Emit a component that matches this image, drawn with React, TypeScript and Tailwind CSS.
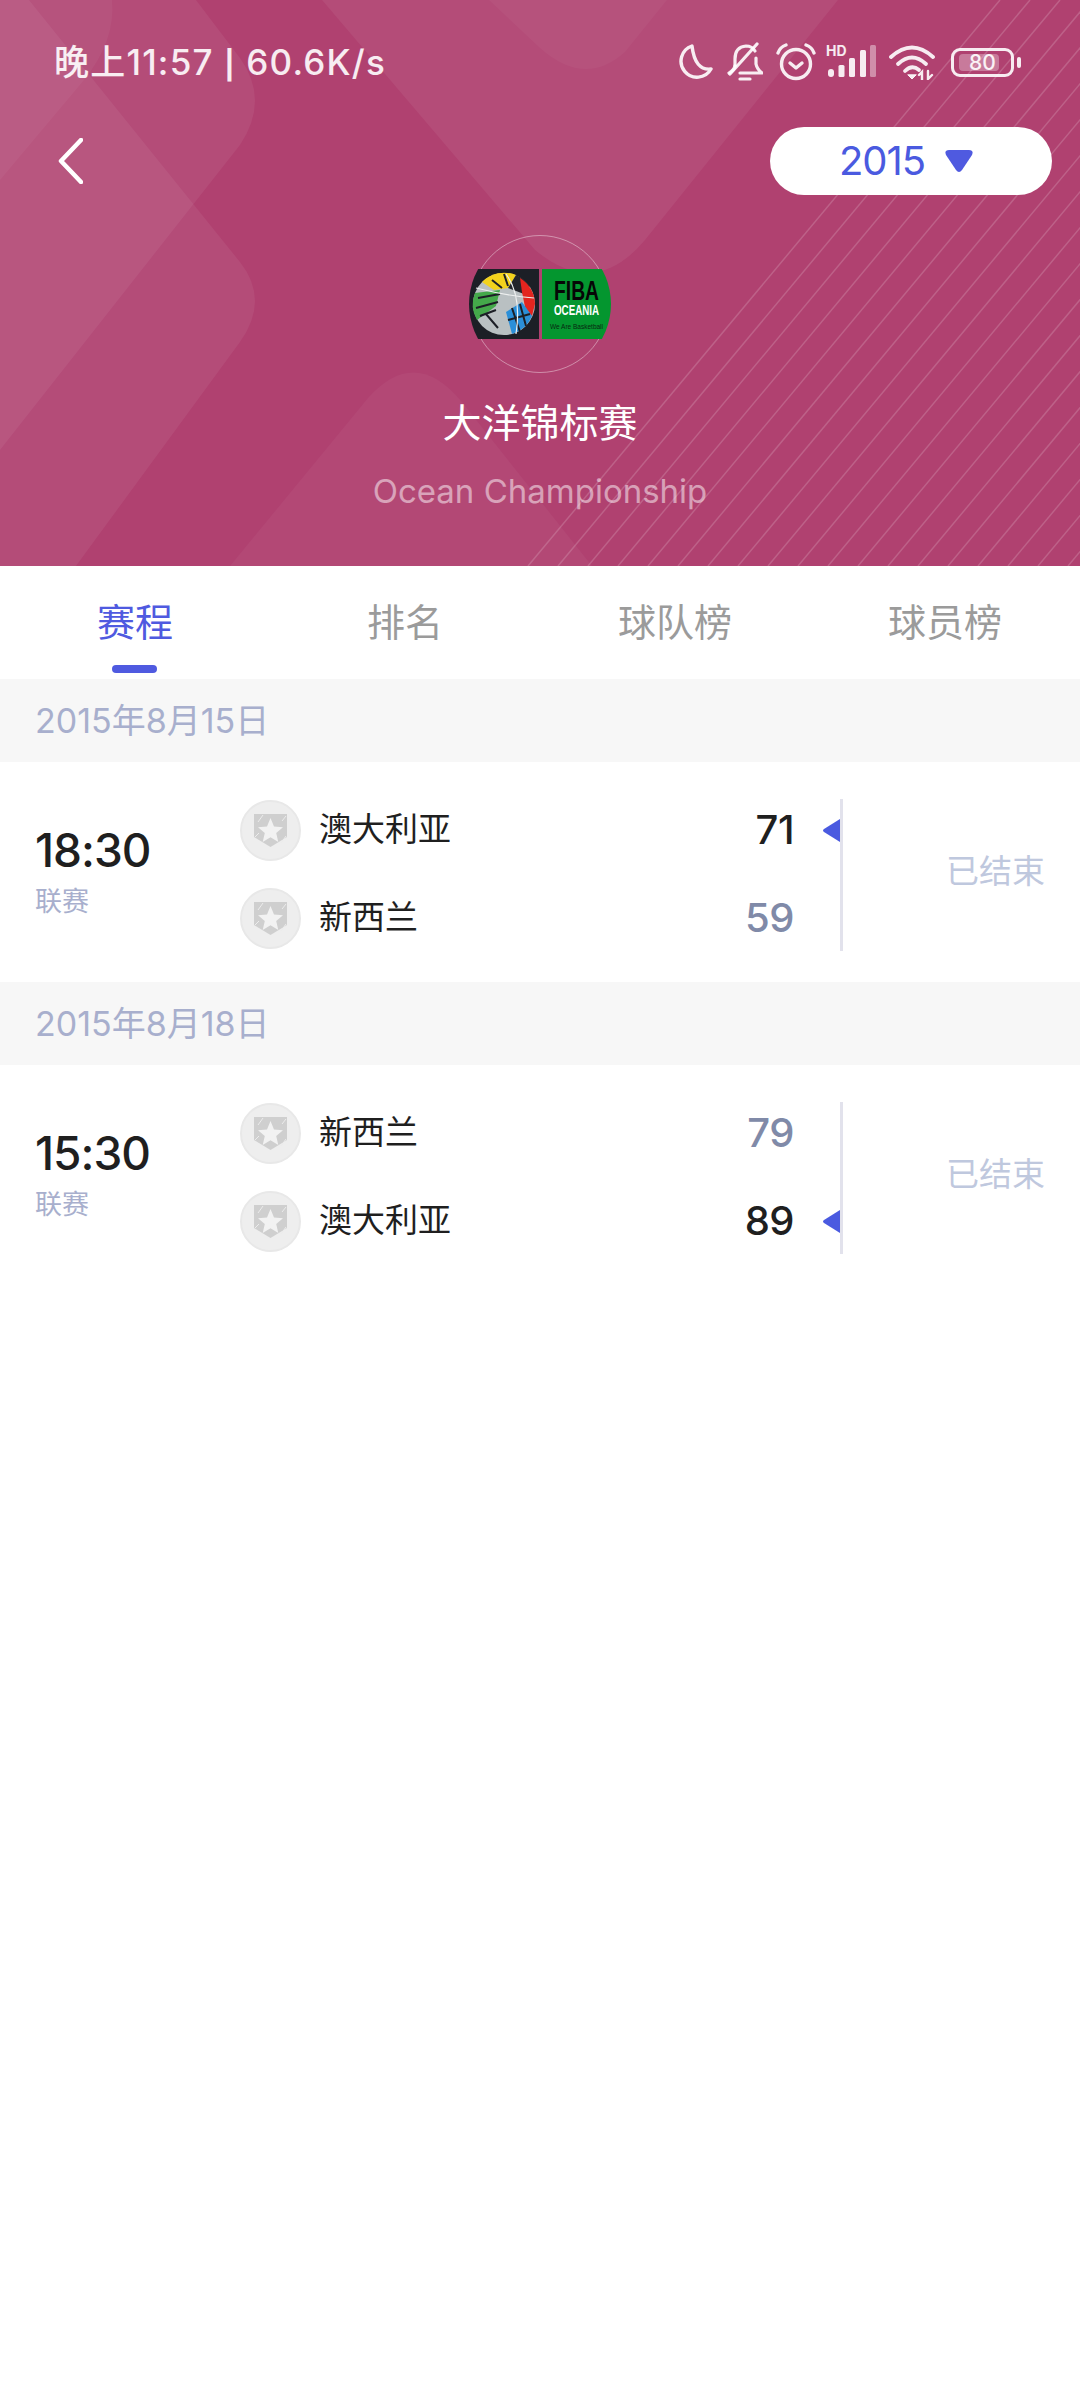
const fontStack = "font-['Inter','Noto_Sans_CJK_SC',sans-serif]";

const matches = [
  {
    date: "2015年8月15日",
    time: "18:30",
    teams: [
      { name: "澳大利亚", score: "71", won: true },
      { name: "新西兰", score: "59", won: false },
    ],
  },
  {
    date: "2015年8月18日",
    time: "15:30",
    teams: [
      { name: "新西兰", score: "79", won: false },
      { name: "澳大利亚", score: "89", won: true },
    ],
  },
];

const tabs = [
  { label: "赛程", active: true },
  { label: "排名", active: false },
  { label: "球队榜", active: false },
  { label: "球员榜", active: false },
];

const stripes = Array.from({ length: 19 }, (_, i) => 1000 + i * 30);

const HeaderBg = () => (
  <svg className="absolute inset-0" width="1080" height="566" viewBox="0 0 1080 566">
    <path d="M196 0 L240 58 Q270 100 240 145 L0 450 L0 0 Z" fill="#fff" fillOpacity="0.06" />
    <path d="M29 0 L240 262 Q270 300 240 342 L76 566 L0 566 L0 0 Z" fill="#fff" fillOpacity="0.06" />
    <path d="M112 0 Q116 40 84 80 L0 180 L0 0 Z" fill="#fff" fillOpacity="0.04" />
    <path d="M322 0 L535 250 Q595 300 645 240 L838 0 Z" fill="#fff" fillOpacity="0.06" />
    <path d="M489 0 L540 48 Q585 88 625 52 L667 0 Z" fill="#fff" fillOpacity="0.035" />
    <path d="M230 566 L368 398 Q415 345 462 402 L592 566 Z" fill="#fff" fillOpacity="0.04" />
    {stripes.map((x) => (
      <line key={x} x1={x} y1="0" x2={x - 472} y2="566" stroke="#fff" strokeOpacity="0.17" strokeWidth="1.5" />
    ))}
  </svg>
);

const StatusIcons = () => (
  <div className="flex items-center text-white/90">
    <svg className="w-[36px] h-[38px]" viewBox="0 0 36 38" fill="none" stroke="currentColor" strokeWidth="3.4" strokeLinejoin="round">
      <path d="M14 3 A16 16 0 1 0 33 26 Q17 28 14 3 Z" />
    </svg>
    <svg className="w-[36px] h-[40px] ml-[13px]" viewBox="0 0 36 40" fill="none" stroke="currentColor" strokeWidth="3.2" strokeLinecap="round" strokeLinejoin="round">
      <path d="M8 24 V17 Q8 5 19 4 Q25 4 28 9" />
      <path d="M29 16 V22 Q30 27 35 31 H13" />
      <path d="M8 24 Q7 28 2 31" />
      <path d="M3 32 L30 2" />
      <path d="M13 37 H23" />
    </svg>
    <svg className="w-[40px] h-[38px] ml-[13px]" viewBox="0 0 40 38" fill="none" stroke="currentColor" strokeWidth="3.4" strokeLinecap="round" strokeLinejoin="round">
      <circle cx="20" cy="21" r="14.5" />
      <path d="M14 20 L20 25 L26 20" />
      <path d="M2 10 Q4 4 10 2" />
      <path d="M38 10 Q36 4 30 2" />
    </svg>
    <svg className="w-[50px] h-[34px] ml-[10px] overflow-visible" viewBox="0 0 50 34">
      <text x="0" y="11" fontSize="14" fontWeight="700" fill="currentColor" fontFamily="Inter, sans-serif">HD</text>
      <rect x="2" y="24" width="6" height="8" rx="3" fill="currentColor" />
      <rect x="12.500" y="20" width="6" height="12" rx="1.500" fill="currentColor" />
      <rect x="23" y="13" width="6" height="19" rx="1.500" fill="currentColor" />
      <rect x="34" y="5" width="6" height="27" rx="1.500" fill="currentColor" />
      <rect x="44" y="0" width="6" height="32" rx="1.500" fill="currentColor" fillOpacity="0.45" />
    </svg>
    <svg className="w-[47px] h-[36px] ml-[13px]" viewBox="0 0 47 36" fill="none" stroke="currentColor" strokeWidth="3.8" strokeLinecap="round">
      <path d="M2 13 Q23 -6 44 13" />
      <path d="M9 20 Q23 7 37 20" />
      <path d="M16 27 Q23 20 30 26" />
      <path d="M19 31 L23 35 L27 31 Z" fill="currentColor" strokeWidth="1" />
      <path d="M33 36 V28 L30 31 M39 27 V35 L43 31" strokeWidth="2.400" />
    </svg>
    <div className="flex items-center ml-[15px]">
      <div className="relative w-[63px] h-[29px] border-[3px] border-white/90 rounded-[9px] overflow-hidden">
        <div className="absolute left-[5px] top-[3px] bottom-[3px] w-[40px] rounded-[4px] bg-white/30" />
        <span className="absolute inset-0 flex items-center justify-center text-[21px] leading-none font-medium">80</span>
      </div>
      <div className="w-[4px] h-[11px] ml-[3px] rounded-[2px] bg-white/90" />
    </div>
  </div>
);

const FibaLogo = () => (
  <svg className="w-[136px] h-[136px] overflow-visible" viewBox="0 0 136 136">
    <defs>
      <clipPath id="logo-clip">
        <circle cx="68" cy="68" r="71" />
      </clipPath>
    </defs>
    <g clipPath="url(#logo-clip)">
      <rect x="-3" y="33" width="70" height="70" fill="#1c1f26" />
      <rect x="70" y="33" width="70" height="70" fill="#04962f" />
      <circle cx="32" cy="68" r="31" fill="#b9c0c2" />
      <path d="M3 57 A31 31 0 0 0 5 84 L24 70 L28 54 Z" fill="#44a94a" />
      <path d="M10 46 A31 31 0 0 1 44 39 L36 52 L22 54 Z" fill="#f2d21c" />
      <path d="M44 39 L36 52 L52 58 L58 50 A31 31 0 0 0 44 39 Z" fill="#22252a" />
      <path d="M48 42 A31 31 0 0 1 63 68 L60 80 L54 76 L50 56 Z" fill="#e3251f" />
      <path d="M34 76 L50 66 L60 80 A31 31 0 0 1 40 98 Z" fill="#2b8fd8" />
      <path d="M6 62 L28 58 M4 72 L26 66 M8 80 L24 74 M40 72 L48 96 M48 68 L54 90 M36 84 L58 78 M14 78 L26 92 M20 44 L30 52 M32 38 L36 50" stroke="#1c1f26" strokeWidth="2" fill="none" />
      <path d="M34 38 Q50 60 44 98 M4 52 Q36 60 62 62" stroke="#eef0f0" strokeWidth="1.200" fill="none" />
      <text x="104.500" y="64" textAnchor="middle" fontSize="27" fontWeight="700" fill="#060606" fontFamily="'Liberation Sans', sans-serif" textLength="45" lengthAdjust="spacingAndGlyphs">FIBA</text>
      <text x="104.500" y="79" textAnchor="middle" fontSize="15" fontWeight="700" fill="#fff" fontFamily="'Liberation Sans', sans-serif" textLength="45" lengthAdjust="spacingAndGlyphs">OCEANIA</text>
      <text x="104.500" y="93" textAnchor="middle" fontSize="8" fill="#08260f" fontFamily="'Liberation Sans', sans-serif" textLength="53" lengthAdjust="spacingAndGlyphs">We Are Basketball</text>
    </g>
  </svg>
);

const TeamBadge = () => (
  <div className="w-[61px] h-[61px] shrink-0 rounded-full bg-[#eeeeee] border-2 border-[#e8e8e8] flex items-center justify-center">
    <svg className="w-[35px] h-[35px]" viewBox="0 0 35 35">
      <path d="M1 1 H34 V24 L17.500 34 L1 24 Z" fill="#cfcfcf" />
      <path d="M17.500 5 L21 13.400 L30 14.200 L23.200 20 L25.300 29 L17.500 24.300 L9.700 29 L11.800 20 L5 14.200 L14 13.400 Z" fill="#f2f2f2" />
      <path d="M5 9 L10 2 M29 8 L33 3 M28 30 L33 23 M2 24 L6 20" stroke="#ececec" strokeWidth="1" />
    </svg>
  </div>
);

const App = () => {
  return (
    <div className={`min-h-[2400px] w-[1080px] bg-white ${fontStack}`}>
      <header className="relative h-[566px] overflow-hidden bg-[#b04170]">
        <HeaderBg />
        <div className="relative pt-[41px]">
          <div className="flex items-center justify-between h-[42px] pl-[54px] pr-[59px]">
            <span className="text-[35px] leading-none font-medium tracking-[1.2px] text-white/90">
              晚上11:57 <span className="text-[28px] font-bold">|</span> 60.6K/s
            </span>
            <StatusIcons />
          </div>
          <div className="flex items-center justify-between h-[68px] mt-[44px] pl-[58px] pr-[28px]">
            <svg className="w-[25px] h-[46px]" viewBox="0 0 25 46" fill="none" stroke="#fff" strokeWidth="4.500" strokeLinecap="round" strokeLinejoin="round">
              <path d="M23 2 L3 23 L23 44" />
            </svg>
            <button className="w-[282px] h-[68px] rounded-full bg-white flex items-center justify-center gap-[20px] pr-[10px]">
              <span className="text-[40px] leading-none text-[#4a5ae0] tracking-[-1px]">2015</span>
              <svg className="w-[28px] h-[23px]" viewBox="0 0 28 23">
                <path d="M4 0 H24 Q29 0 27 5 L17 20 Q14 24 11 20 L1 5 Q-1 0 4 0 Z" fill="#4f5ae0" />
              </svg>
            </button>
          </div>
          <div className="flex flex-col items-center mt-[40px]">
            <div className="relative w-[138px] h-[138px] rounded-full border border-white/40 -ml-[1px]">
              <FibaLogo />
            </div>
            <h1 className="mt-[25px] text-[39px] leading-[50px] font-normal text-white">大洋锦标赛</h1>
            <p className="mt-[22px] text-[33px] leading-[42px] text-white/50">Ocean Championship</p>
          </div>
        </div>
      </header>

      <nav className="grid grid-cols-4 h-[113px]">
        {tabs.map((t) => (
          <div key={t.label} className="relative flex justify-center pt-[31px]">
            <span className={`text-[38px] leading-[50px] ${t.active ? "text-[#4f5ae0]" : "text-[#9b9b9b]"}`}>{t.label}</span>
            {t.active && <div className="absolute left-[112px] bottom-[6px] w-[45px] h-[8px] rounded-full bg-[#4f5ae0]" />}
          </div>
        ))}
      </nav>

      {matches.map((m) => (
        <section key={m.date}>
          <div className="h-[83px] bg-[#f7f7f7] flex items-center pl-[35px] text-[34px] text-[#a8afcd]">{m.date}</div>
          <div className="flex items-center h-[220px] pl-[35px]">
            <div className="w-[205px] -mt-[2px]">
              <div className="text-[46px] leading-[56px] font-medium tracking-[-1px] text-[#1f1f1f]">{m.time}</div>
              <div className="mt-[6px] text-[27px] leading-[36px] text-[#a8afcd]">联赛</div>
            </div>
            <div className="w-[554px] flex flex-col gap-[27px] mt-[4px]">
              {m.teams.map((team) => (
                <div key={team.name} className="flex items-center h-[61px]">
                  <TeamBadge />
                  <span className="ml-[18px] text-[33px] text-[#1f1f1f]">{team.name}</span>
                  <span className={`ml-auto text-[40px] leading-none font-medium tracking-[-0.5px] ${team.won ? "text-[#1f1f1f]" : "text-[#808aa8]"}`}>
                    {team.score}
                  </span>
                </div>
              ))}
            </div>
            <div className="w-[46px] flex flex-col gap-[27px] items-end mt-[4px]">
              {m.teams.map((team) => (
                <div key={team.name} className="h-[61px] flex items-center">
                  {team.won && (
                    <svg className="w-[17px] h-[23px]" viewBox="0 0 17 23">
                      <path d="M17 0 V23 L1 13 Q-1 11.500 1 10 Z" fill="#4a5ae0" />
                    </svg>
                  )}
                </div>
              ))}
            </div>
            <div className="w-[3px] h-[152px] bg-[#e2e2ec] mt-[6px]" />
            <div className="flex-1 flex justify-end pr-[35px] text-[33px] text-[#bfc8de]">已结束</div>
          </div>
        </section>
      ))}
    </div>
  );
};

export default App;
